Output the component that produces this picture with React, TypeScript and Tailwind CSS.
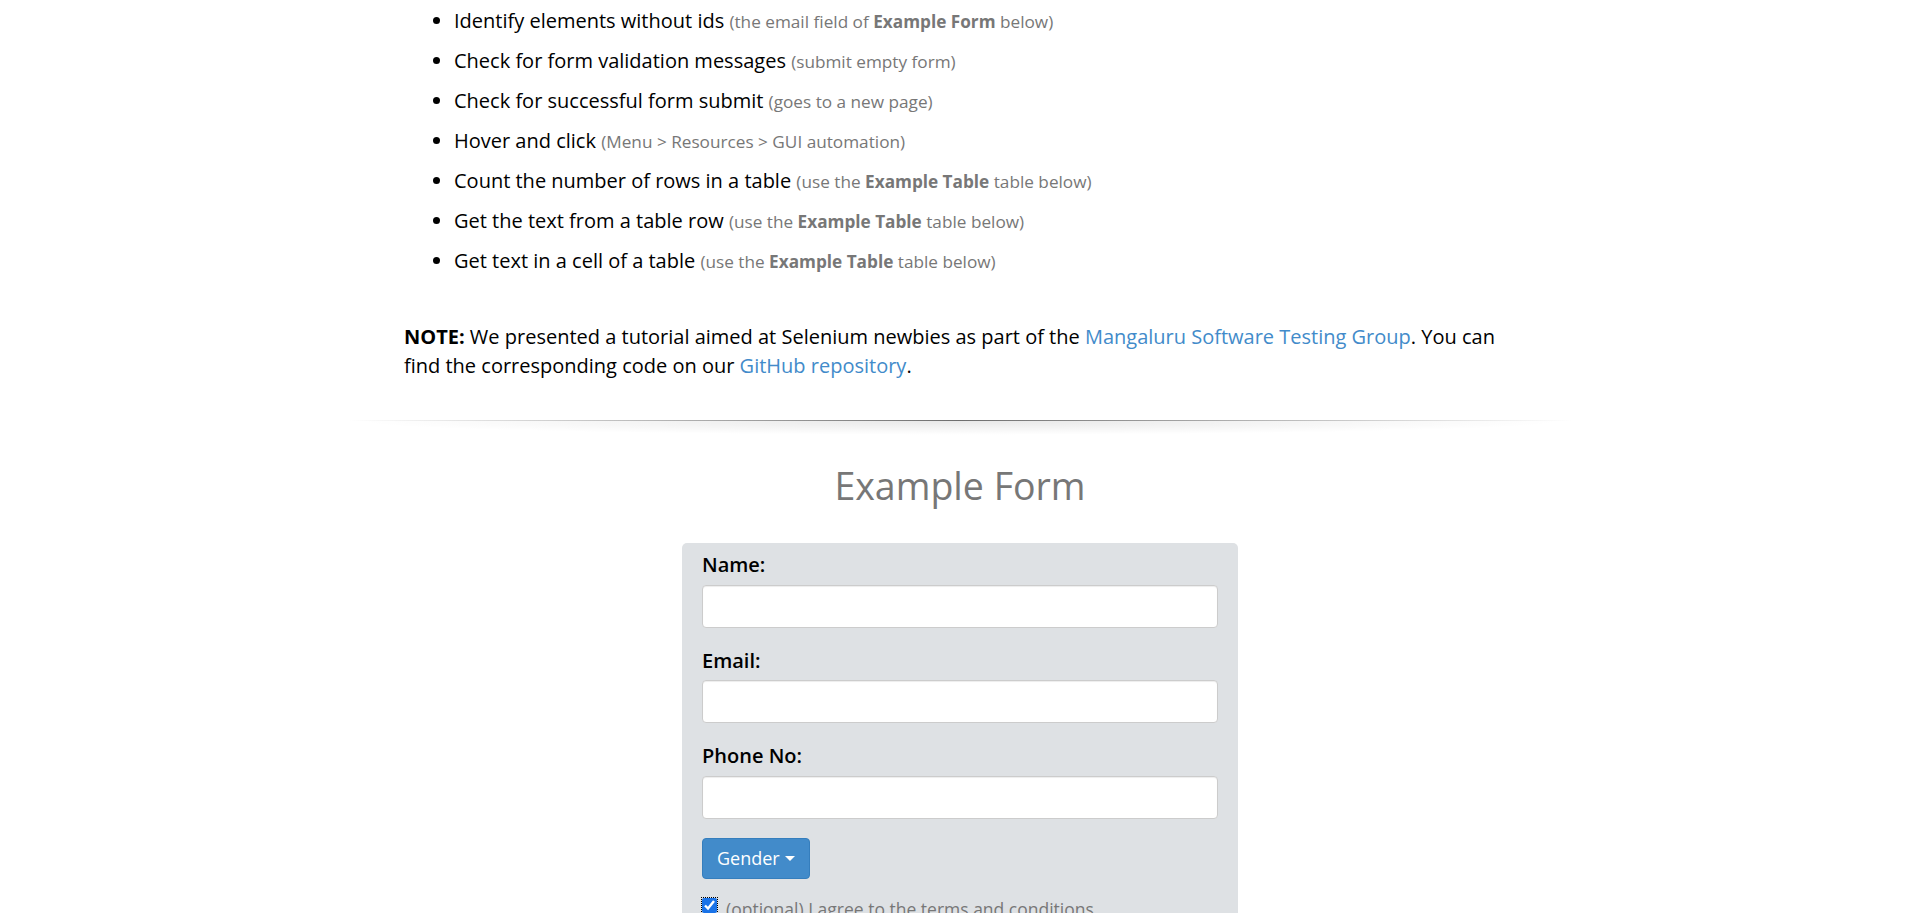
import React from "react";

const items: { main: string; note: React.ReactNode }[] = [
  { main: "Identify elements without ids", note: <>(the email field of <b className="font-bold">Example Form</b> below)</> },
  { main: "Check for form validation messages", note: <>(submit empty form)</> },
  { main: "Check for successful form submit", note: <>(goes to a new page)</> },
  { main: "Hover and click", note: <>(Menu &gt; Resources &gt; GUI automation)</> },
  { main: "Count the number of rows in a table", note: <>(use the <b className="font-bold">Example Table</b> table below)</> },
  { main: "Get the text from a table row", note: <>(use the <b className="font-bold">Example Table</b> table below)</> },
  { main: "Get text in a cell of a table", note: <>(use the <b className="font-bold">Example Table</b> table below)</> },
];

function Field({ label }: { label: string }) {
  return (
    <div className="mb-[19px]">
      <label className="block text-[20px] leading-[28.57px] font-semibold text-black mb-[5px]">{label}</label>
      <div className="h-[43px] w-full bg-white border border-[#ccc] rounded-[4px] shadow-[inset_0_1px_1px_rgba(0,0,0,0.075)]" />
    </div>
  );
}

export default function App() {
  return (
    <div className="w-full min-h-[913px] bg-white font-['Open_Sans',sans-serif] text-black overflow-hidden">
      <div className="w-[1112px] mx-auto">
        <ul className="list-disc pl-[50px] mt-[1px]">
          {items.map((it, i) => (
            <li key={i} className="h-[40px] text-[20px] leading-[40px]">
              {it.main} <span className="text-[17.2px] leading-none text-[#777]">{it.note}</span>
            </li>
          ))}
        </ul>
        <p className="mt-[42px] text-[20px] leading-[28.57px]">
          <b className="font-bold">NOTE:</b> We presented a tutorial aimed at Selenium newbies as part of the{" "}
          <a className="text-[#428bca]">Mangaluru Software Testing Group</a>. You can find the corresponding code on our{" "}
          <a className="text-[#428bca]">GitHub repository</a>.
        </p>
      </div>
      <div className="flex justify-center mt-[40px]">
        <div className="w-[1224px]">
          <div className="h-px bg-gradient-to-r from-transparent via-[#6e6e6e] to-transparent" />
          <div className="h-[14px] bg-[radial-gradient(ellipse_at_top,rgba(0,0,0,0.09),transparent_70%)]" />
        </div>
      </div>
      <h2 className="mt-[31px] text-center text-[37.5px] leading-[40px] text-[#777] font-normal">Example Form</h2>
      <div className="mt-[37px] w-[556px] mx-auto bg-[#dee1e4] rounded-[5px] px-5 pt-[8px] pb-6">
        <Field label="Name:" />
        <Field label="Email:" />
        <Field label="Phone No:" />
        <button className="h-[41px] px-[14px] bg-[#428bca] border border-[#357ebd] rounded-[4px] text-white text-[18px] flex items-center gap-[5px]">
          Gender
          <span className="inline-block w-0 h-0 border-l-[5px] border-r-[5px] border-t-[5px] border-l-transparent border-r-transparent border-t-white" />
        </button>
        <div className="mt-[16px] flex items-start gap-[9px]">
          <input type="checkbox" defaultChecked className="mt-[3px] w-[15px] h-[15px] accent-[#1a73e8] outline-1 outline-dotted outline-black" />
          <span className="mt-[2px] text-[17.5px] leading-[25px] text-[#777]">(optional) I agree to the terms and conditions</span>
        </div>
      </div>
    </div>
  );
}
